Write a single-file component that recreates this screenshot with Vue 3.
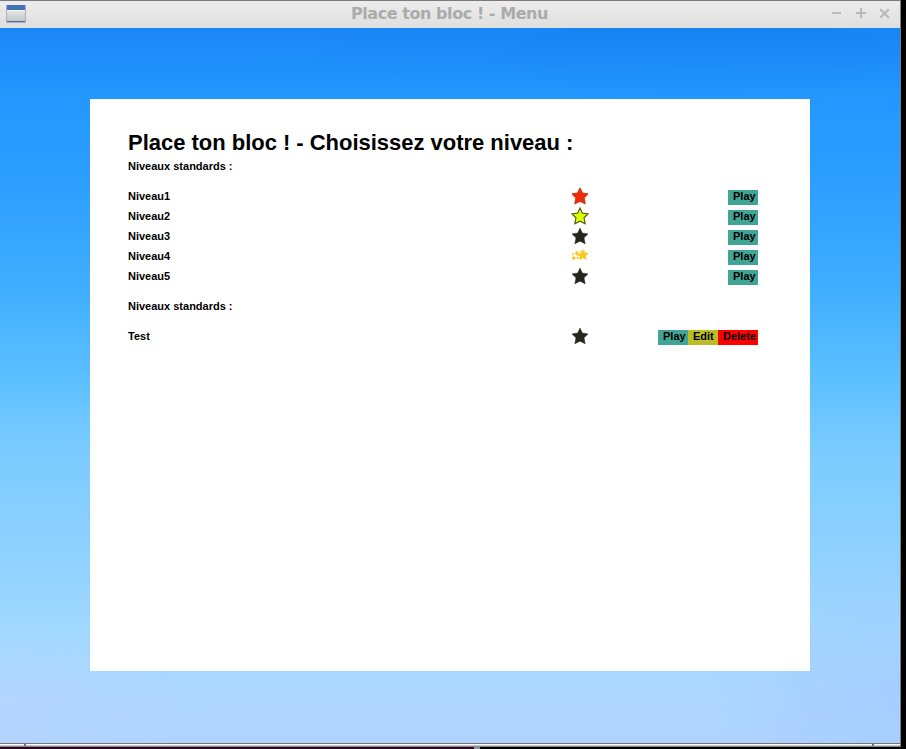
<script setup>
const star = 'M10 2 L12.3 7.1 L18 7.9 L14 11.8 L15.2 17.8 L10 15.2 L4.8 17.8 L6 11.8 L2 7.9 L7.7 7.1 Z'
const play = { label: 'Play', kind: 'play' }
const groups = [
  {
    title: 'Niveaux standards :',
    levels: [
      { name: 'Niveau1', star: 'red', actions: [play] },
      { name: 'Niveau2', star: 'lime', actions: [play] },
      { name: 'Niveau3', star: 'dark', actions: [play] },
      { name: 'Niveau4', star: 'gold', actions: [play] },
      { name: 'Niveau5', star: 'dark', actions: [play] },
    ],
  },
  {
    title: 'Niveaux standards :',
    levels: [
      {
        name: 'Test',
        star: 'dark',
        actions: [play, { label: 'Edit', kind: 'edit' }, { label: 'Delete', kind: 'delete' }],
      },
    ],
  },
]
</script>

<template>
  <div class="desktop">
    <div class="window">
      <header class="titlebar">
        <svg class="app-icon" width="20" height="18" viewBox="0 0 20 18">
          <defs>
            <linearGradient id="pane" x1="0" y1="0" x2="0" y2="1">
              <stop offset="0" stop-color="#e6e8e7" />
              <stop offset="1" stop-color="#c6c8c7" />
            </linearGradient>
          </defs>
          <rect x="0" y="0" width="20" height="18" rx="1" fill="#a9b0b9" />
          <rect x="1" y="5" width="18" height="11" fill="url(#pane)" />
          <rect x="1" y="0" width="18" height="5" fill="#3f71b5" />
          <rect x="1" y="5" width="18" height="1" fill="#f1f3f4" />
          <rect x="1" y="16" width="18" height="1" fill="#4b71a5" />
        </svg>
        <h1 class="window-title">Place ton bloc ! - Menu</h1>
        <svg class="controls" width="60" height="14" viewBox="0 0 60 14" fill="none" stroke="#b9b9b9" stroke-width="2">
          <path d="M1 7H10M25 7H35M30 2V12" />
          <path d="M49.2 3.2L57.8 11.8M57.8 3.2L49.2 11.8" stroke-width="2.3" />
        </svg>
      </header>
      <main class="sky">
        <section class="panel">
          <h2 class="heading">Place ton bloc ! - Choisissez votre niveau :</h2>
          <div v-for="(group, g) in groups" :key="g" class="group">
            <h3 class="group-title">{{ group.title }}</h3>
            <div v-for="level in group.levels" :key="level.name" class="level">
              <span class="name">{{ level.name }}</span>
              <svg class="star" :class="level.star" width="20" height="20" viewBox="0 0 20 20">
                <template v-if="level.star === 'gold'">
                  <path d="M14 2.8L14.9 6.4L18.9 7.3L15.8 9.7L16.6 14L13 12L9.6 14.2L9.8 10.8L7 8.6L10.6 7.4L10.8 4.2L12.6 5.2Z" />
                  <path d="M6.4 4.6L7.5 5.9L9.4 5.7L8.5 7.4L9.2 8.9L7.4 8.6L6 9.8L5.7 8L4.2 7.1L5.8 6.2ZM3.4 10L4.4 11L6 11.2L5 12.4L5.2 14L3.6 13.4L2 13.8L2.4 12.3L1.4 11.1L3 10.9ZM2 7.4H4V9H2ZM7.6 10.5L9 12L7.8 13.6L6.4 12.1Z" />
                </template>
                <path v-else :d="star" />
              </svg>
              <div class="actions">
                <button v-for="action in level.actions" :key="action.kind" class="action" :class="action.kind">
                  {{ action.label }}
                </button>
              </div>
            </div>
          </div>
        </section>
      </main>
      <footer class="frame-bottom">
        <i class="grip"></i>
        <i class="grip"></i>
      </footer>
    </div>
    <div class="taskbar"><i class="task-mark"></i></div>
  </div>
</template>

<style>
body {
  margin: 0;
  overflow: hidden;
}
</style>

<style scoped>
.desktop {
  width: 906px;
  height: 749px;
  background: #000;
  overflow: hidden;
}
.window {
  box-sizing: border-box;
  width: 901px;
  height: 747px;
  border-top: 1px solid #7c7a7b;
  border-right: 1px solid #7c7a7b;
  display: flex;
  flex-direction: column;
}
.titlebar {
  box-sizing: border-box;
  height: 27px;
  padding: 4px 9px 0 6px;
  display: grid;
  grid-template-columns: 60px 1fr 60px;
  align-items: start;
  background: linear-gradient(#ececec, #dfdfdf);
}
.controls {
  margin-top: 1px;
}
.window-title {
  margin: -4px 0 0;
  padding-left: 2px;
  font: bold 16px/25px "DejaVu Sans", sans-serif;
  letter-spacing: -0.44px;
  text-align: center;
  white-space: nowrap;
  color: #ababab;
}
.sky {
  height: 715px;
  display: flex;
  justify-content: center;
  align-items: flex-start;
  padding-top: 71px;
  box-sizing: border-box;
  background:
    radial-gradient(ellipse 190px 170px at 100% 94%, rgba(160, 200, 255, 0.55), transparent),
    radial-gradient(ellipse 200px 80px at 0% 95%, rgba(186, 213, 255, 0.5), transparent),
    radial-gradient(ellipse 420px 75px at 78% 0%, rgba(20, 125, 235, 0.35), transparent),
    linear-gradient(#1a86f5 0%, #2497ff 9%, #2b9dff 20%, #3fadff 36%, #5cc0ff 49%, #7bcbff 59%, #8bd0ff 71%, #a2d8ff 85%, #add5ff 94%, #afd3ff 100%);
}
.panel {
  box-sizing: border-box;
  width: 720px;
  height: 572px;
  padding: 31px 52px 0 38px;
  background: #fff;
  color: #000;
  font: bold 11px/20px "Liberation Sans", Arial, sans-serif;
}
.heading {
  margin: 0;
  font-size: 22px;
  line-height: 26px;
  letter-spacing: -0.02px;
  white-space: nowrap;
}
.group + .group {
  padding-top: 10px;
}
.group-title {
  margin: 0 0 10px;
  font-size: 11px;
  line-height: 20px;
}
.level {
  display: grid;
  grid-template-columns: 442px 20px 168px;
  height: 20px;
}
.star {
  display: block;
  overflow: visible;
}
.red {
  fill: #f52a08;
  stroke: #a23a20;
  stroke-width: 0.9;
  filter: drop-shadow(0 0 1px #ffb09a);
}
.lime {
  fill: #dcff00;
  stroke: #4d5710;
  stroke-width: 1.1;
}
.dark {
  fill: #25271f;
  stroke: #25271f;
  stroke-width: 0.5;
}
.gold {
  fill: #ffc61e;
}
.actions {
  display: flex;
  justify-content: flex-end;
  align-items: flex-start;
  padding-top: 4px;
}
.action {
  box-sizing: border-box;
  width: 30px;
  height: 15px;
  margin: 0;
  padding: 0 0 0 5px;
  border: 0;
  border-radius: 0;
  font: inherit;
  line-height: 12px;
  text-align: left;
  color: #000;
  display: flex;
}
.play {
  background: #41a596;
}
.edit {
  background: #bbbd26;
}
.delete {
  width: 40px;
  background: #f00;
}
.frame-bottom {
  height: 4px;
  flex: none;
  box-sizing: border-box;
  border-top: 1px solid #777;
  border-bottom: 1px solid #888;
  background: linear-gradient(#fff 50%, #c8c6c7 50%);
  display: flex;
  justify-content: space-between;
  padding: 0 26px 0 24px;
}
.grip {
  width: 2px;
  height: 2px;
  background: #777;
}
.taskbar {
  height: 2px;
  display: flex;
  padding-left: 474px;
  background: linear-gradient(90deg, #2b0423 474px, #000 474px);
}
.task-mark {
  width: 6px;
  height: 2px;
  background: #8593ae;
}
</style>
